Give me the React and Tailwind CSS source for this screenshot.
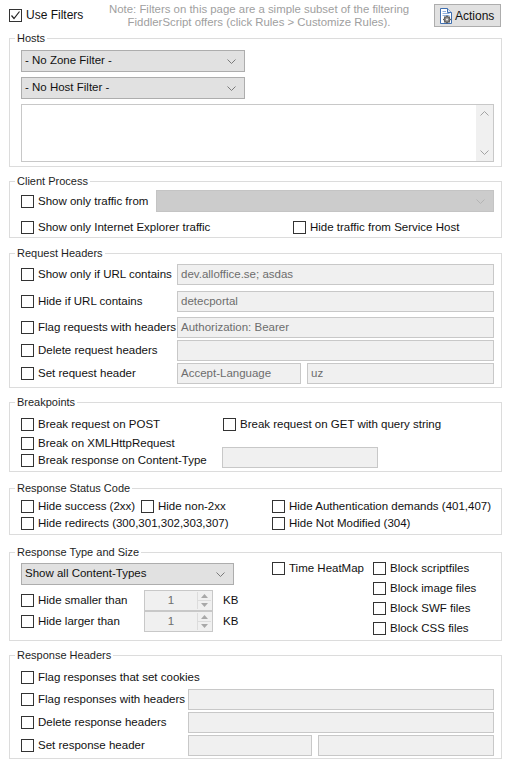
import React from 'react';

// Fiddler "Filters" tab, WinForms look

function Box({ checked }) {
    return (
        <span className="w-[13px] h-[13px] border border-[#333333] bg-white shrink-0 flex items-center justify-center">
            {checked && (
                <svg width="11" height="11" viewBox="0 0 11 11">
                    <path d="M1.5 5.5L4 8.5L9.5 1.5" fill="none" stroke="#222" strokeWidth="1.2" />
                </svg>
            )}
        </span>
    );
}

function Check({ label, w, checked }) {
    return (
        <div className="flex items-center gap-[4px] h-[13px] shrink-0 whitespace-nowrap" style={w ? { width: w } : undefined}>
            <Box checked={checked} />
            <span className="leading-[13px]">{label}</span>
        </div>
    );
}

function Chevron({ color = '#606060' }) {
    return (
        <svg width="9" height="5" viewBox="0 0 9 5">
            <path d="M0.5 0.5L4.5 4.5L8.5 0.5" fill="none" stroke={color} />
        </svg>
    );
}

function Combo({ text, w }) {
    return (
        <div className="h-[22px] bg-[#e1e1e1] border border-[#adadad] flex items-center justify-between pl-[3px] pr-[8px] shrink-0" style={{ width: w }}>
            <span>{text}</span>
            <Chevron color="#7a7a7a" />
        </div>
    );
}

function Text({ value, w }) {
    return (
        <div className="h-[21px] bg-[#f0f0f0] border border-[#c8c8c8] flex items-center px-[3px] text-[#6d6d6d] shrink-0 whitespace-nowrap overflow-hidden" style={{ width: w }}>
            {value}
        </div>
    );
}

function Spin() {
    return (
        <div className="w-[69px] h-[21px] bg-[#f0f0f0] border border-[#c8c8c8] flex shrink-0">
            <div className="flex-1 flex items-center justify-center text-[#6d6d6d]">1</div>
            <div className="w-[14px] my-[1px] mr-[1px] flex flex-col border-l border-[#dcdcdc]">
                <div className="flex-1 flex items-center justify-center border-b border-[#dcdcdc]">
                    <svg width="7" height="4" viewBox="0 0 7 4"><path d="M0 4L3.5 0L7 4Z" fill="#a8a8a8" /></svg>
                </div>
                <div className="flex-1 flex items-center justify-center">
                    <svg width="7" height="4" viewBox="0 0 7 4"><path d="M0 0L3.5 4L7 0Z" fill="#a8a8a8" /></svg>
                </div>
            </div>
        </div>
    );
}

function Group({ title, mt, children }) {
    return (
        <div className="ml-[9px] w-[493px] border border-[#dcdcdc] pl-[11px]" style={{ marginTop: mt }}>
            <div className="-mt-[8px] -ml-[6px] px-[2px] w-fit bg-white h-[14px] leading-[14px] text-[11px] text-[#1e1e1e]">{title}</div>
            {children}
        </div>
    );
}

function ActionsIcon() {
    return (
        <svg width="16" height="16" viewBox="0 0 16 16">
            <path d="M2.5 0.5H9.5L13.5 4.5V15.5H2.5Z" fill="#ffffff" stroke="#3f6fb0" />
            <path d="M9.5 0.5V4.5H13.5" fill="#dbe6f4" stroke="#3f6fb0" />
            <path d="M4.5 3.5H8M4.5 5.5H11.5M4.5 7.5H11.5" stroke="#8fb0dc" />
            <circle cx="9" cy="11.5" r="3" fill="#8a8a8a" stroke="#555" />
            <circle cx="9" cy="11.5" r="1.1" fill="#e8e8e8" />
            <path d="M9 7.6V8.6M9 14.4V15.4M5.1 11.5H6.1M11.9 11.5H12.9M6.2 8.7L6.9 9.4M11.1 13.6L11.8 14.3M11.8 8.7L11.1 9.4M6.9 13.6L6.2 14.3" stroke="#555" strokeWidth="1.2" />
        </svg>
    );
}

export default function App() {
    return (
        <div className="w-[508px] h-[774px] bg-white text-[11.5px] text-[#111] [font-family:'Liberation_Sans',Arial,sans-serif] overflow-hidden">
            {/* TOP BAR */}
            <div className="h-[38px] flex items-start">
                <div className="mt-[9px] ml-[9px] flex items-center gap-[4px] w-[100px]">
                    <Box checked />
                    <span className="text-[12px] leading-[13px]">Use Filters</span>
                </div>
                <div className="mt-[3px] w-[300px] text-center text-[11.4px] leading-[13px] text-[#a0a0a0] whitespace-nowrap">
                    Note: Filters on this page are a simple subset of the filtering<br />
                    FiddlerScript offers (click Rules &gt; Customize Rules).
                </div>
                <div className="mt-[4px] ml-[25px] w-[67px] h-[23px] bg-[#e1e1e1] border border-[#adadad] flex items-center gap-[1px] pl-[3px] text-[12px]">
                    <ActionsIcon />
                    <span>Actions</span>
                </div>
            </div>

            {/* HOSTS */}
            <Group title="Hosts" mt={0}>
                <div className="mt-[5px]"><Combo text="- No Zone Filter -" w={224} /></div>
                <div className="mt-[5px]"><Combo text="- No Host Filter -" w={224} /></div>
                <div className="mt-[5px] w-[473px] h-[58px] border border-[#c8c8c8] bg-white flex justify-end mb-[4px]">
                    <div className="w-[17px] bg-[#f0f0f0] flex flex-col justify-between items-center py-[6px]">
                        <svg width="9" height="5" viewBox="0 0 9 5"><path d="M0.5 4.5L4.5 0.5L8.5 4.5" fill="none" stroke="#a3a3a3" /></svg>
                        <Chevron color="#a3a3a3" />
                    </div>
                </div>
            </Group>

            {/* CLIENT PROCESS */}
            <Group title="Client Process" mt={14}>
                <div className="mt-[2px] flex items-center">
                    <Check label="Show only traffic from" w={135} />
                    <div className="w-[338px] h-[22px] bg-[#cccccc] border border-[#c4c4c4] flex items-center justify-end pr-[8px]">
                        <Chevron color="#b4b4b4" />
                    </div>
                </div>
                <div className="mt-[9px] mb-[3px] flex items-center">
                    <Check label="Show only Internet Explorer traffic" w={272} />
                    <Check label="Hide traffic from Service Host" />
                </div>
            </Group>

            {/* REQUEST HEADERS */}
            <Group title="Request Headers" mt={15}>
                <div className="mt-[4px] flex items-center">
                    <Check label="Show only if URL contains" w={156} />
                    <Text value="dev.alloffice.se; asdas" w={317} />
                </div>
                <div className="mt-[6px] flex items-center">
                    <Check label="Hide if URL contains" w={156} />
                    <Text value="detecportal" w={317} />
                </div>
                <div className="mt-[5px] flex items-center">
                    <Check label="Flag requests with headers" w={156} />
                    <Text value="Authorization: Bearer" w={317} />
                </div>
                <div className="mt-[2px] flex items-center">
                    <Check label="Delete request headers" w={156} />
                    <Text value="" w={317} />
                </div>
                <div className="mt-[2px] mb-[3px] flex items-center">
                    <Check label="Set request header" w={156} />
                    <Text value="Accept-Language" w={124} />
                    <div className="w-[6px]" />
                    <Text value="uz" w={187} />
                </div>
            </Group>

            {/* BREAKPOINTS */}
            <Group title="Breakpoints" mt={14}>
                <div className="flex">
                    <div className="w-[201px] flex flex-col mt-[9px] mb-[4px]">
                        <Check label="Break request on POST" />
                        <div className="mt-[6px]"><Check label="Break on XMLHttpRequest" /></div>
                        <div className="mt-[4px]"><Check label="Break response on Content-Type" /></div>
                    </div>
                    <div className="flex flex-col mt-[9px]">
                        <div className="ml-[1px]"><Check label="Break request on GET with query string" /></div>
                        <div className="mt-[16px]"><Text value="" w={156} /></div>
                    </div>
                </div>
            </Group>

            {/* RESPONSE STATUS CODE */}
            <Group title="Response Status Code" mt={16}>
                <div className="mt-[5px] flex items-center">
                    <Check label="Hide success (2xx)" w={120} />
                    <Check label="Hide non-2xx" w={131} />
                    <Check label="Hide Authentication demands (401,407)" />
                </div>
                <div className="mt-[4px] mb-[4px] flex items-center">
                    <Check label="Hide redirects (300,301,302,303,307)" w={251} />
                    <Check label="Hide Not Modified (304)" />
                </div>
            </Group>

            {/* RESPONSE TYPE AND SIZE */}
            <Group title="Response Type and Size" mt={17}>
                <div className="flex">
                    <div className="w-[251px] flex flex-col mb-[8px]">
                        <div className="mt-[4px]"><Combo text="Show all Content-Types" w={213} /></div>
                        <div className="mt-[5px] flex items-center">
                            <Check label="Hide smaller than" w={123} />
                            <Spin />
                            <span className="ml-[10px]">KB</span>
                        </div>
                        <div className="flex items-center">
                            <Check label="Hide larger than" w={123} />
                            <Spin />
                            <span className="ml-[10px]">KB</span>
                        </div>
                    </div>
                    <div className="mt-[3px] flex">
                        <Check label="Time HeatMap" w={101} />
                        <div className="flex flex-col gap-[7px]">
                            <Check label="Block scriptfiles" />
                            <Check label="Block image files" />
                            <Check label="Block SWF files" />
                            <Check label="Block CSS files" />
                        </div>
                    </div>
                </div>
            </Group>

            {/* RESPONSE HEADERS */}
            <Group title="Response Headers" mt={14}>
                <div className="mt-[9px]"><Check label="Flag responses that set cookies" /></div>
                <div className="mt-[5px] flex items-center">
                    <Check label="Flag responses with headers" w={167} />
                    <Text value="" w={306} />
                </div>
                <div className="mt-[2px] flex items-center">
                    <Check label="Delete response headers" w={167} />
                    <Text value="" w={306} />
                </div>
                <div className="mt-[2px] mb-[2px] flex items-center">
                    <Check label="Set response header" w={167} />
                    <Text value="" w={124} />
                    <div className="w-[6px]" />
                    <Text value="" w={176} />
                </div>
            </Group>
        </div>
    );
}
